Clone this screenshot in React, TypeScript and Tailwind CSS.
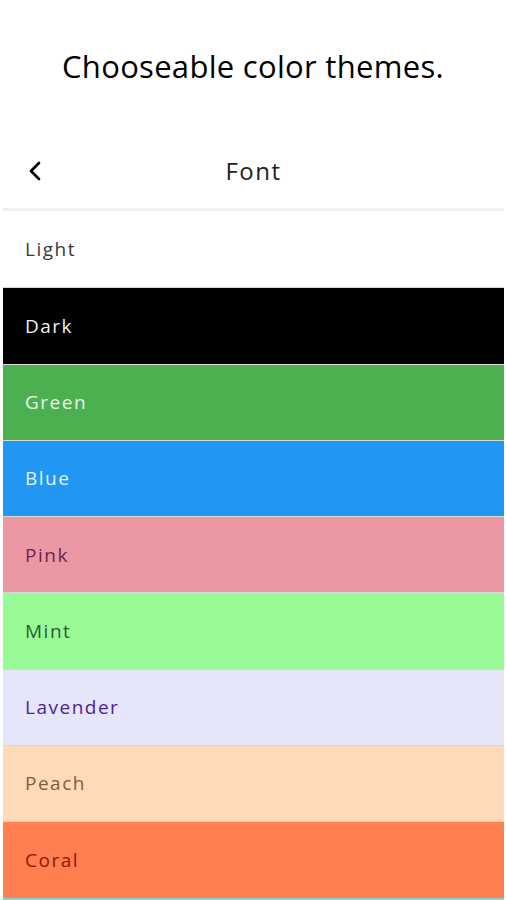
import { ChevronLeft } from 'lucide-react'

const themes = [
  { name: 'Light', bg: 'bg-white', text: 'text-[#3a3a3a]' },
  { name: 'Dark', bg: 'bg-black', text: 'text-[#f0f0f0]' },
  { name: 'Green', bg: 'bg-[#4caf50]', text: 'text-[#e8f5e9]' },
  { name: 'Blue', bg: 'bg-[#2196f3]', text: 'text-[#e3f2fd]' },
  { name: 'Pink', bg: 'bg-[#ec98a4]', text: 'text-[#6b2350]' },
  { name: 'Mint', bg: 'bg-[#98fb98]', text: 'text-[#2f5a2f]' },
  { name: 'Lavender', bg: 'bg-[#e6e6fa]', text: 'text-[#4a2590]' },
  { name: 'Peach', bg: 'bg-[#ffdab9]', text: 'text-[#8a5a35]' },
  { name: 'Coral', bg: 'bg-[#ff7f50]', text: 'text-[#8b1a0a]' },
]

export default function App() {
  return (
    <div className="h-[900px] w-[506px] overflow-hidden bg-white font-['Comic_Sans_MS','Open_Sans',sans-serif]">
      <div className="flex h-[133px] items-center justify-center">
        <h1 className="text-[31px] tracking-[0.3px] text-black">Chooseable color themes.</h1>
      </div>

      <div className="pl-[3px] pr-[2px]">
        <div className="relative flex h-[78px] items-center justify-center border-b-[3px] border-[#f0f0f0]">
          <ChevronLeft className="absolute left-[16px] h-8 w-8 text-black" strokeWidth={2} />
          <span className="text-[24px] tracking-[1.5px] text-[#222]">Font</span>
        </div>

        <div className="flex flex-col">
          {themes.map((t, i) => (
            <div
              key={t.name}
              className={`flex h-[76.3px] items-center px-[22px] ${t.bg} ${i > 0 ? 'border-t border-[#d8d8d8]' : ''}`}
            >
              <span className={`text-[19px] tracking-[1.5px] ${t.text}`}>{t.name}</span>
            </div>
          ))}
          <div className="h-[3px] bg-[#8fd0dd]" />
        </div>
      </div>
    </div>
  )
}
